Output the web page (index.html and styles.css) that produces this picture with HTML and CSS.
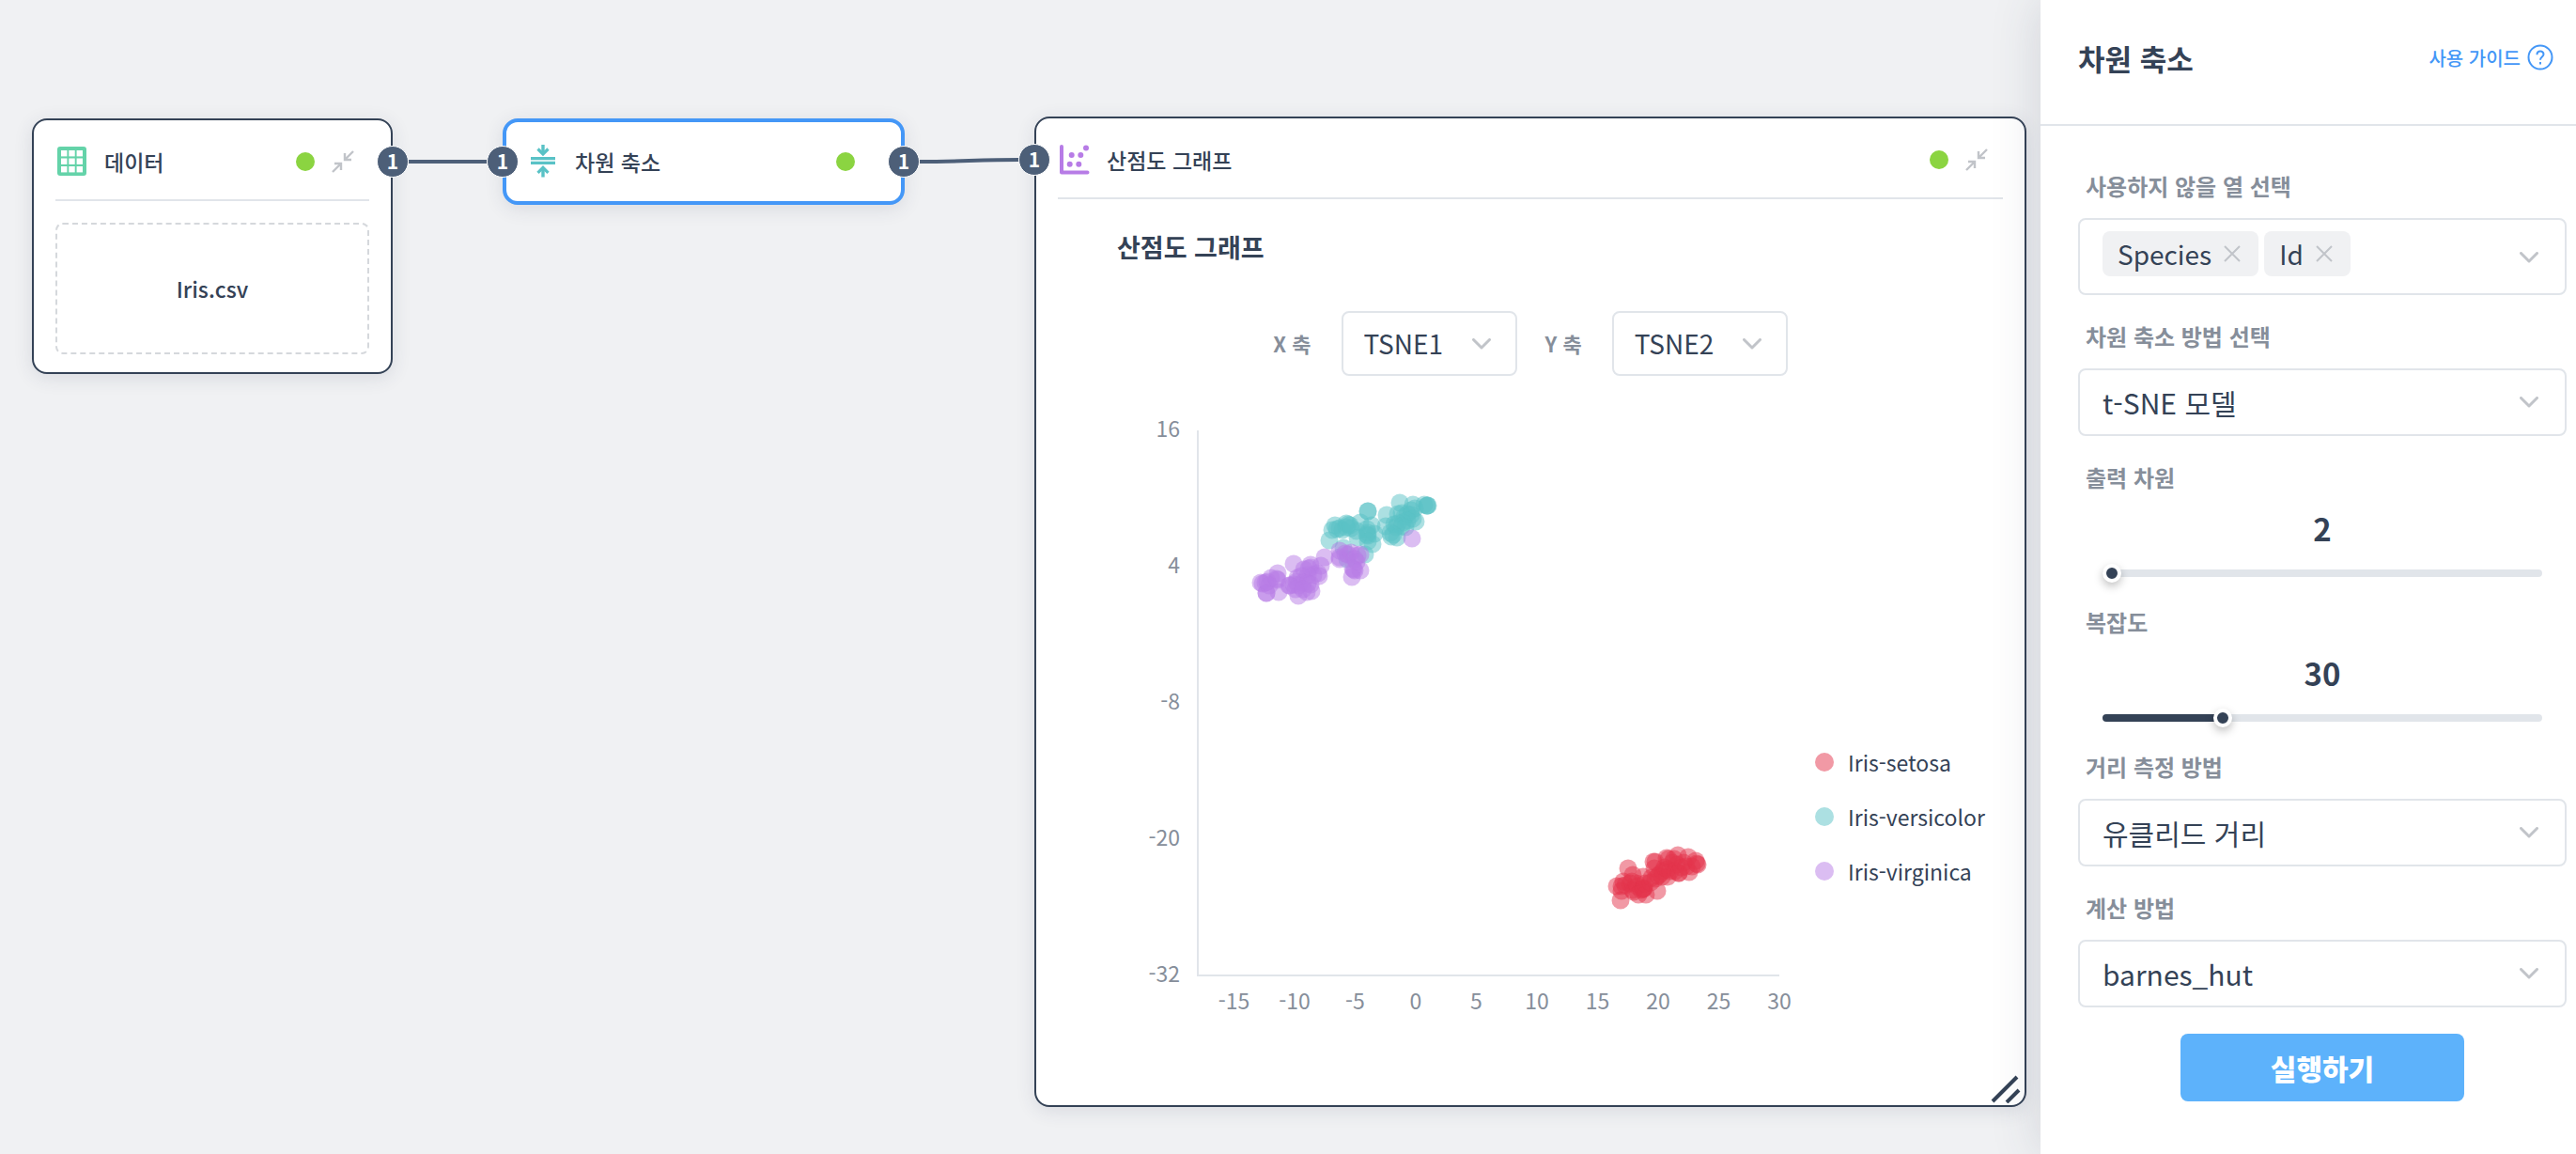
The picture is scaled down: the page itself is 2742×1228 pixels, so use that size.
FILE: index.html
```html
<!DOCTYPE html>
<html lang="ko">
<head>
    <meta charset="UTF-8">
    <meta name="viewport" content="width=device-width, initial-scale=1.0">
    <title>차원 축소</title>
    <link rel="stylesheet" href="styles.css">
</head>
<body>
    <main class="workspace">
        <section class="node node-data">
            <header class="node-header">
                <svg class="node-icon" viewBox="0 0 32 32">
                    <rect x="0" y="0" width="31" height="31" rx="3" fill="#64d3a9"/>
                    <g fill="#fff">
                        <rect x="4" y="4" width="6.4" height="6.4"/><rect x="12.3" y="4" width="6.4" height="6.4"/><rect x="20.6" y="4" width="6.4" height="6.4"/>
                        <rect x="4" y="12.5" width="6.4" height="6.4"/><rect x="12.3" y="12.5" width="6.4" height="6.4"/><rect x="20.6" y="12.5" width="6.4" height="6.4"/>
                        <rect x="4" y="21" width="6.4" height="6.4"/><rect x="12.3" y="21" width="6.4" height="6.4"/><rect x="20.6" y="21" width="6.4" height="6.4"/>
                    </g>
                </svg>
                <h2 class="node-title">데이터</h2>
                <span class="status"></span>
                <button class="collapse" type="button" aria-label="접기">
                    <svg viewBox="0 0 24 24"><path d="M23 1L14 10M14 3v7h7M1 23L10 14M3 14h7v7"/></svg>
                </button>
            </header>
            <div class="file-box">Iris.csv</div>
        </section>

        <section class="node node-reduce">
            <header class="node-header">
                <svg class="node-icon" viewBox="0 0 32 32">
                    <g fill="none" stroke="#59c2c6" stroke-width="3.4">
                        <path d="M3 12.6h26M3 17.4h26" stroke-width="3.2"/>
                        <path d="M16 -2v9M16 32.500v-9"/>
                        <path d="M10.5 2.500l5.500 5.500 5.500-5.500M10.5 27.800l5.500-5.500 5.500 5.500" stroke-width="3.2"/>
                    </g>
                </svg>
                <h2 class="node-title">차원 축소</h2>
                <span class="status"></span>
            </header>
        </section>

        <section class="node node-chart">
            <header class="node-header">
                <svg class="node-icon" viewBox="0 0 32 32">
                    <path d="M2 2V29.500H29.500" fill="none" stroke="#b77ce6" stroke-width="4" stroke-linecap="round" stroke-linejoin="round"/>
                    <g fill="#b77ce6">
                        <circle cx="28" cy="3.400" r="3"/><circle cx="12.700" cy="11" r="3"/><circle cx="22.300" cy="11" r="3"/>
                        <circle cx="10.700" cy="20.700" r="3"/><circle cx="20.300" cy="20.700" r="3"/>
                    </g>
                </svg>
                <h2 class="node-title">산점도 그래프</h2>
                <span class="status"></span>
                <button class="collapse" type="button" aria-label="접기">
                    <svg viewBox="0 0 24 24"><path d="M23 1L14 10M14 3v7h7M1 23L10 14M3 14h7v7"/></svg>
                </button>
            </header>
            <h3 class="chart-title">산점도 그래프</h3>
            <div class="axis-row">
                <label class="axis-label" for="axis-x">X 축</label>
                <div class="select axis-select">
                    <select id="axis-x"><option>TSNE1</option><option>TSNE2</option></select>
                    <svg class="chevron" viewBox="0 0 20 12"><path d="M1.500 1.500L10 10l8.500-8.500"/></svg>
                </div>
                <label class="axis-label" for="axis-y">Y 축</label>
                <div class="select axis-select">
                    <select id="axis-y"><option>TSNE2</option><option>TSNE1</option></select>
                    <svg class="chevron" viewBox="0 0 20 12"><path d="M1.500 1.500L10 10l8.500-8.500"/></svg>
                </div>
            </div>
            <div class="chart">
                <svg class="plot" viewBox="0 0 710 660">
                    <path class="axis-line" d="M75 28V608H694"/>
                    <g id="y-ticks" class="tick tick-y"></g>
                    <g id="x-ticks" class="tick tick-x"></g>
                    <g id="points" class="points"></g>
                </svg>
                <ul class="legend">
                    <li><span class="swatch setosa"></span>Iris-setosa</li>
                    <li><span class="swatch versicolor"></span>Iris-versicolor</li>
                    <li><span class="swatch virginica"></span>Iris-virginica</li>
                </ul>
            </div>
            <svg class="resize" viewBox="0 0 32 32"><path d="M2 30L28 4M17 31L30 18"/></svg>
        </section>

        <!-- links between nodes and their ports -->
        <svg class="wires">
            <path d="M435 172H518"/>
            <path d="M979 172C1020 172 1043 170 1085 170"/>
        </svg>
        <span class="port port-data-out">1</span>
        <span class="port port-reduce-in">1</span>
        <span class="port port-reduce-out">1</span>
        <span class="port port-chart-in">1</span>
    </main>

    <aside class="sidebar">
        <header class="sidebar-header">
            <h1>차원 축소</h1>
            <a class="guide" href="#guide">사용 가이드
                <svg viewBox="0 0 28 28"><circle cx="14" cy="14" r="12.500"/><path d="M10.500 11.200c0-4.800 7-4.600 7-.500 0 2.800-3.500 2.800-3.500 6M14 19v2.400"/></svg>
            </a>
        </header>
        <form class="settings">
            <div class="field">
                <span class="field-label" id="columns-label">사용하지 않을 열 선택</span>
                <div class="multi" role="group" aria-labelledby="columns-label">
                    <span class="tag">Species<button type="button" aria-label="Species 삭제"><svg viewBox="0 0 18 18"><path d="M1 1l16 16M17 1L1 17"/></svg></button></span>
                    <span class="tag">Id<button type="button" aria-label="Id 삭제"><svg viewBox="0 0 18 18"><path d="M1 1l16 16M17 1L1 17"/></svg></button></span>
                    <button class="multi-open" type="button" aria-label="열기">
                        <svg class="chevron" viewBox="0 0 20 12"><path d="M1.500 1.500L10 10l8.500-8.500"/></svg>
                    </button>
                </div>
            </div>
            <div class="field">
                <label class="field-label" for="method">차원 축소 방법 선택</label>
                <div class="select">
                    <select id="method"><option>t-SNE 모델</option></select>
                    <svg class="chevron" viewBox="0 0 20 12"><path d="M1.500 1.500L10 10l8.500-8.500"/></svg>
                </div>
            </div>
            <div class="field">
                <label class="field-label" for="dimension">출력 차원</label>
                <output class="field-value" for="dimension">2</output>
                <input class="slider" id="dimension" type="range" min="2" max="10" value="2" style="--fill: 0%">
            </div>
            <div class="field">
                <label class="field-label" for="perplexity">복잡도</label>
                <output class="field-value" for="perplexity">30</output>
                <input class="slider" id="perplexity" type="range" min="5" max="100" value="30" style="--fill: 27%">
            </div>
            <div class="field">
                <label class="field-label" for="metric">거리 측정 방법</label>
                <div class="select">
                    <select id="metric"><option>유클리드 거리</option></select>
                    <svg class="chevron" viewBox="0 0 20 12"><path d="M1.500 1.500L10 10l8.500-8.500"/></svg>
                </div>
            </div>
            <div class="field">
                <label class="field-label" for="algorithm">계산 방법</label>
                <div class="select">
                    <select id="algorithm"><option>barnes_hut</option></select>
                    <svg class="chevron" viewBox="0 0 20 12"><path d="M1.500 1.500L10 10l8.500-8.500"/></svg>
                </div>
            </div>
            <button class="run" type="button">실행하기</button>
        </form>
    </aside>

    <script src="chart.js"></script>
</body>
</html>
```

FILE: styles.css
```css
* {
    box-sizing: border-box;
}

body {
    margin: 0;
    display: flex;
    min-height: 100vh;
    background-color: #f0f1f3;
    color: #344256;
    font-family: "Noto Sans CJK KR", "Noto Sans", sans-serif;
}

h1, h2, h3, ul {
    margin: 0;
    padding: 0;
    font-weight: 500;
}

button, select {
    font: inherit;
    color: inherit;
}

button {
    padding: 0;
    border: 0;
    background: none;
}

.workspace {
    position: relative;
    flex: 1;
    overflow: hidden;
}

/* nodes */
.node {
    position: absolute;
    padding: 0 23px;
    background-color: #fff;
    border: 2px solid #344256;
    border-radius: 16px;
    box-shadow: 0 4px 20px rgba(50, 60, 90, 0.12);
}

.node-data {
    left: 34px;
    top: 126px;
    width: 384px;
    padding-bottom: 19px;
}

.node-reduce {
    left: 535px;
    top: 126px;
    width: 428px;
    padding: 0 21px;
    border: 4px solid #4497f7;
}

.node-chart {
    left: 1101px;
    top: 124px;
    width: 1056px;
    padding-bottom: 86px;
}

.node-header {
    display: flex;
    align-items: center;
    height: 86px;
    padding: 4px 16px 0 2px;
    border-bottom: 2px solid #e1e5ea;
}

.node-reduce .node-header {
    height: 84px;
    padding: 0 28px 0 2px;
    border-bottom: 0;
}

.node-icon {
    width: 32px;
    height: 32px;
    margin-right: 18px;
    overflow: visible;
}

.node-title {
    flex: 1;
    font-size: 23px;
    line-height: 32px;
}

.status {
    width: 20px;
    height: 20px;
    border-radius: 50%;
    background-color: #8bd441;
}

.collapse {
    width: 24px;
    height: 24px;
    margin-left: 18px;
}

.collapse svg {
    display: block;
    fill: none;
    stroke: #c1c4c9;
    stroke-width: 2.4;
}

.file-box {
    display: flex;
    align-items: center;
    justify-content: center;
    height: 140px;
    margin-top: 23px;
    border: 2px dashed #d5d8dc;
    border-radius: 8px;
    font-size: 23px;
    font-weight: 500;
}

.wires {
    position: absolute;
    left: 0;
    top: 0;
    width: 100%;
    height: 100%;
    fill: none;
    stroke: #4d5f78;
    stroke-width: 4;
    pointer-events: none;
}

.port {
    position: absolute;
    width: 34px;
    height: 34px;
    border: 1px solid #fff;
    border-radius: 50%;
    background-color: #4d5f78;
    color: #fff;
    font-size: 21px;
    font-weight: 700;
    line-height: 31px;
    text-align: center;
    transform: translate(-50%, -50%);
}

.port-data-out {
    left: 418px;
    top: 172px;
}

.port-reduce-in {
    left: 535px;
    top: 172px;
}

.port-reduce-out {
    left: 962px;
    top: 172px;
}

.port-chart-in {
    left: 1101px;
    top: 170px;
}

/* chart */
.chart-title {
    margin: 31px 0 0 63px;
    font-size: 27px;
    font-weight: 700;
    line-height: 40px;
}

.axis-row {
    display: flex;
    align-items: center;
    justify-content: center;
    margin-top: 48px;
}

.axis-label {
    color: #868e9a;
    font-size: 22px;
    font-weight: 700;
    line-height: 30px;
    padding-bottom: 2px;
}

.axis-select {
    width: 187px;
    margin: 0 30px 0 32px;
}

.axis-select:last-child {
    margin-right: 0;
}

.chart {
    display: flex;
    gap: 22px;
    margin: 30px 0 0 74px;
}

.plot {
    width: 710px;
    height: 660px;
}

.axis-line {
    fill: none;
    stroke: #e1e5ea;
    stroke-width: 2;
}

.tick {
    fill: #868e9a;
    font-size: 23px;
}

.tick-y {
    text-anchor: end;
}

.tick-x {
    text-anchor: middle;
}

.setosa {
    fill: #e4334b;
    background-color: #e4334b;
}

.versicolor {
    fill: #59c2c6;
    background-color: #59c2c6;
}

.virginica {
    fill: #b77ce6;
    background-color: #b77ce6;
}

.points circle {
    fill-opacity: 0.5;
}

.legend {
    align-self: flex-end;
    margin-bottom: 134px;
    list-style: none;
    font-size: 23px;
    font-weight: 400;
    line-height: 58px;
}

.legend li {
    display: flex;
    align-items: center;
    gap: 15px;
}

.swatch {
    width: 20px;
    height: 20px;
    border-radius: 50%;
    opacity: 0.5;
}

.resize {
    position: absolute;
    right: 4px;
    bottom: 2px;
    width: 32px;
    height: 32px;
    stroke: #344256;
    stroke-width: 4;
}

/* sidebar */
.sidebar {
    position: relative;
    width: 570px;
    background-color: #fff;
    box-shadow: 0 0 50px rgba(50, 60, 90, 0.16);
}

.sidebar-header {
    display: flex;
    align-items: center;
    justify-content: space-between;
    height: 134px;
    padding: 0 24px 10px 40px;
    border-bottom: 2px solid #e1e5ea;
}

.sidebar-header h1 {
    font-size: 31px;
    font-weight: 700;
}

.guide {
    display: flex;
    align-items: center;
    gap: 7px;
    color: #4497f7;
    font-size: 20px;
    font-weight: 500;
    text-decoration: none;
}

.guide svg {
    width: 28px;
    height: 28px;
    fill: none;
    stroke: #4497f7;
    stroke-width: 2;
}

.settings {
    display: flex;
    flex-direction: column;
    gap: 28px;
    padding: 48px 10px 48px 40px;
}

.field {
    display: flex;
    flex-direction: column;
    gap: 16px;
}

.field-label {
    padding: 0 0 2px 8px;
    color: #868e9a;
    font-size: 24px;
    font-weight: 700;
    line-height: 32px;
}

.select {
    display: grid;
    align-items: center;
}

.select select,
.select .chevron {
    grid-area: 1 / 1;
}

.select select {
    width: 100%;
    height: 72px;
    padding: 0 24px;
    appearance: none;
    background-color: #fff;
    border: 2px solid #e1e5ea;
    border-radius: 8px;
    font-size: 30px;
}

.select .chevron {
    justify-self: end;
    margin-right: 30px;
    pointer-events: none;
}

.axis-select select {
    height: 69px;
    padding: 0 22px 2px;
    font-size: 28px;
}

.axis-select .chevron {
    margin-right: 28px;
}

.chevron {
    display: block;
    width: 20px;
    height: 12px;
    fill: none;
    stroke: #c1c4c9;
    stroke-width: 3;
    stroke-linecap: round;
    stroke-linejoin: round;
}

.multi {
    display: flex;
    gap: 6px;
    align-items: flex-start;
    height: 82px;
    padding: 12px 28px 0 24px;
    border: 2px solid #e1e5ea;
    border-radius: 8px;
}

.tag {
    display: flex;
    align-items: center;
    gap: 13px;
    height: 48px;
    padding: 0 19px 0 16px;
    background-color: #f0f1f3;
    border-radius: 8px;
    font-size: 28px;
}

.tag svg {
    display: block;
    width: 18px;
    height: 18px;
    stroke: #c1c4c9;
    stroke-width: 2;
}

.multi-open {
    align-self: center;
    margin-left: auto;
    padding-bottom: 10px;
}

.field-value {
    padding-bottom: 4px;
    font-size: 33px;
    font-weight: 700;
    line-height: 40px;
    text-align: center;
}

.slider {
    appearance: none;
    height: 16px;
    margin: 0 26px;
    background: none;
}

.slider::-webkit-slider-runnable-track {
    height: 8px;
    border-radius: 4px;
    background: linear-gradient(to right, #344256 var(--fill), #e1e5ea var(--fill));
}

.slider::-webkit-slider-thumb {
    appearance: none;
    width: 20px;
    height: 20px;
    margin-top: -6px;
    border: 4px solid #fff;
    border-radius: 50%;
    background-color: #344256;
    box-shadow: 0 4px 10px rgba(0, 0, 0, 0.25);
}

.run {
    align-self: center;
    width: 302px;
    height: 72px;
    border-radius: 8px;
    background-color: #5db2fb;
    color: #fff;
    font-size: 30px;
    font-weight: 900;
}
```

FILE: chart.js
```js
// Points of each species, in plot coordinates
const species = {
    setosa: [
        [533, 494], [538, 501], [528, 508], [521, 513], [525, 528], [526, 513], [526, 518], [530, 512],
        [535, 510], [537, 508], [538, 517], [539, 519], [543, 513], [542, 510], [547, 517], [549, 516],
        [549, 516], [550, 515], [544, 522], [552, 522], [564, 518], [549, 503], [551, 510], [557, 509],
        [558, 504], [560, 487], [562, 487], [561, 494], [565, 502], [562, 505], [567, 500], [570, 497],
        [569, 503], [575, 503], [572, 493], [574, 483], [576, 484], [575, 495], [578, 497], [580, 488],
        [582, 484], [585, 490], [586, 480], [583, 497], [587, 499], [587, 499], [590, 493], [592, 488],
        [597, 482], [595, 492], [598, 498], [601, 492], [605, 486], [606, 489], [607, 490]
    ],
    versicolor: [
        [290, 105], [304, 107], [316, 107], [319, 108], [319, 108], [320, 108], [256, 114], [256, 114],
        [276, 118], [306, 111], [302, 113], [298, 117], [292, 116], [288, 117], [295, 120], [302, 118],
        [307, 125], [304, 122], [298, 124], [293, 126], [288, 127], [284, 128], [286, 131], [292, 130],
        [296, 131], [275, 130], [280, 137], [281, 141], [283, 139], [287, 142], [248, 126], [260, 129],
        [263, 138], [261, 149], [256, 137], [255, 139], [256, 140], [255, 133], [256, 146], [245, 142],
        [244, 135], [221, 129], [218, 134], [215, 145], [223, 133], [226, 132], [229, 134], [233, 127],
        [235, 128], [237, 129], [238, 132], [233, 131], [230, 153], [234, 165], [253, 160]
    ],
    virginica: [
        [303, 143], [226, 156], [226, 165], [226, 163], [232, 159], [235, 160], [238, 158], [248, 160],
        [245, 161], [242, 165], [244, 168], [240, 175], [241, 176], [242, 177], [248, 177], [239, 184],
        [210, 163], [206, 172], [177, 170], [195, 171], [195, 174], [193, 175], [188, 176], [203, 180],
        [204, 183], [198, 182], [192, 182], [185, 183], [181, 185], [180, 189], [187, 190], [177, 192],
        [173, 193], [172, 193], [182, 193], [192, 191], [195, 192], [196, 199], [191, 200], [182, 204],
        [179, 197], [187, 197], [160, 180], [161, 200], [148, 201], [148, 201], [142, 190], [144, 191],
        [147, 190], [149, 189], [153, 185], [159, 186], [160, 187], [151, 193]
    ]
};

const SVG = 'http://www.w3.org/2000/svg';

function add(parent, name, attrs, text) {
    const el = document.createElementNS(SVG, name);
    for (const key in attrs) {
        el.setAttribute(key, attrs[key]);
    }
    if (text !== undefined) {
        el.textContent = text;
    }
    document.getElementById(parent).appendChild(el);
}

[16, 4, -8, -20, -32].forEach((value, i) => {
    add('y-ticks', 'text', { x: 56, y: 35 + i * 145 }, value);
});

for (let value = -15; value <= 30; value += 5) {
    add('x-ticks', 'text', { x: 694 - (30 - value) * 12.9, y: 644 }, value);
}

for (const name in species) {
    species[name].forEach(([cx, cy]) => {
        add('points', 'circle', { class: name, cx, cy, r: 9.5 });
    });
}
```
